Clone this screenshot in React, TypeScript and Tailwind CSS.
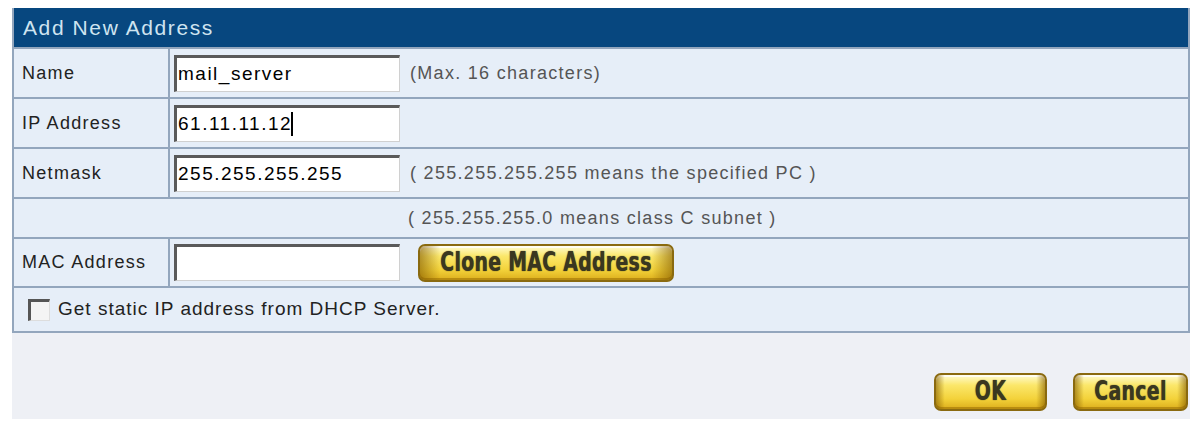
const font = "font-['Liberation_Sans',Arial,sans-serif]"

function Field({ value, caret }: { value: string; caret?: boolean }) {
  return (
    <div className="w-[226px] h-[37px] bg-white border-t-[3px] border-l-[3px] border-b border-r border-t-[#5a5a5a] border-l-[#5a5a5a] border-b-[#d0d0d0] border-r-[#d0d0d0] flex items-center pl-[1px] text-[19px] tracking-[1.5px] text-black">
      {value}
      {caret && <span className="inline-block w-[2px] h-[24px] bg-black -ml-[1px]" />}
    </div>
  )
}

function GoldButton({ label, className }: { label: string; className: string }) {
  return (
    <button
      className={`relative h-[38px] rounded-[7px] border-2 border-[#8a6a10] bg-[linear-gradient(180deg,#fffbd0_0%,#fbe76a_30%,#f3d23a_70%,#dcae1c_100%)] shadow-[inset_0_2px_0_#fffdf0,inset_0_-2px_0_#b88c10] flex items-center justify-center overflow-hidden ${className}`}
    >
      <span className="absolute inset-0 bg-[linear-gradient(90deg,rgba(130,90,0,0.6)_0%,rgba(130,90,0,0)_8%,rgba(130,90,0,0)_92%,rgba(130,90,0,0.6)_100%)]" />
      <span className="relative inline-block scale-y-[1.3] font-['DejaVu_Sans_Condensed','DejaVu_Sans',sans-serif] font-stretch-condensed font-bold text-[21px] text-[#3a3720] tracking-[0.3px] [text-shadow:0_0_1px_#3a3720]">
        {label}
      </span>
    </button>
  )
}

function Row({ label, children, note, h }: { label: string; children: React.ReactNode; note?: string; h: string }) {
  return (
    <div className={`flex border-t-2 border-[#93a6bd] ${h}`}>
      <div className="w-[156px] border-r-2 border-[#93a6bd] flex items-center pl-[8px] text-[18px] tracking-[1.3px] text-[#222]">
        {label}
      </div>
      <div className="flex items-center pl-[4px] gap-[10px]">
        {children}
        {note && <span className="text-[18px] tracking-[1.3px] text-[#555]">{note}</span>}
      </div>
    </div>
  )
}

export default function App() {
  return (
    <div className={`bg-white w-[1198px] h-[423px] pt-[8px] pl-[12px] ${font}`}>
      <div className="w-[1178px] bg-[#e6eef8] border-x-2 border-b-2 border-[#93a6bd] border-t-0">
        <div className="h-[39px] bg-[#07477f] flex items-center pl-[9px] text-[21px] tracking-[1.6px] text-[#cfe4f0]">
          Add New Address
        </div>
        <Row label="Name" h="h-[50px]" note="(Max. 16 characters)">
          <Field value="mail_server" />
        </Row>
        <Row label="IP Address" h="h-[50px]">
          <Field value="61.11.11.12" caret />
        </Row>
        <Row label="Netmask" h="h-[50px]" note="( 255.255.255.255 means the specified PC )">
          <Field value="255.255.255.255" />
        </Row>
        <div className="h-[40px] border-t-2 border-[#93a6bd] flex items-center pl-[394px] text-[18px] tracking-[1.3px] text-[#555]">
          ( 255.255.255.0 means class C subnet )
        </div>
        <Row label="MAC Address" h="h-[49px]">
          <Field value="" />
          <GoldButton label="Clone MAC Address" className="w-[256px] ml-[8px]" />
        </Row>
        <div className="h-[45px] border-t-2 border-[#93a6bd] flex items-center pl-[14px] gap-[8px] text-[19px] tracking-[1px] text-[#222]">
          <span className="w-[22px] h-[22px] bg-[#f4f4f4] border-t-[3px] border-l-[3px] border-b border-r border-t-[#555] border-l-[#555] border-b-[#ddd] border-r-[#ddd]" />
          Get static IP address from DHCP Server.
        </div>
      </div>
      <div className="w-[1178px] h-[86px] bg-[#eef0f5] flex justify-end items-end pb-[8px] pr-[2px] gap-[26px]">
        <GoldButton label="OK" className="w-[113px]" />
        <GoldButton label="Cancel" className="w-[115px]" />
      </div>
    </div>
  )
}
